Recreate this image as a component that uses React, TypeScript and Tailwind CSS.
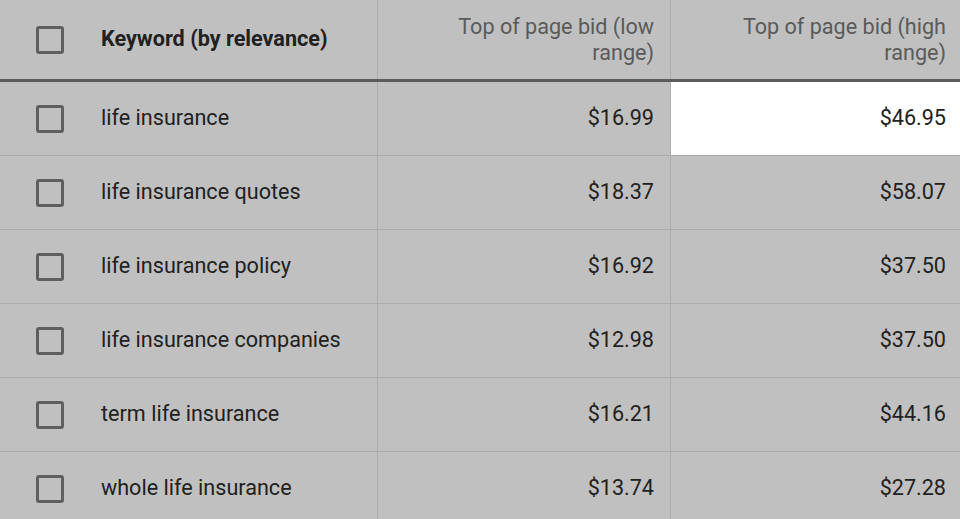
const rows = [
  { keyword: 'life insurance', low: '$16.99', high: '$46.95', highlight: true },
  { keyword: 'life insurance quotes', low: '$18.37', high: '$58.07' },
  { keyword: 'life insurance policy', low: '$16.92', high: '$37.50' },
  { keyword: 'life insurance companies', low: '$12.98', high: '$37.50' },
  { keyword: 'term life insurance', low: '$16.21', high: '$44.16' },
  { keyword: 'whole life insurance', low: '$13.74', high: '$27.28' },
]

function Checkbox() {
  return <div className="w-[28px] h-[28px] rounded-[3px] border-[3px] border-[#5f5f5f] shrink-0" />
}

export default function App() {
  return (
    <div
      className="w-[960px] h-[519px] overflow-hidden bg-[#c0c0c0] text-[#212121]"
      style={{ fontFamily: 'Roboto, "Liberation Sans", sans-serif' }}
    >
      {/* header */}
      <div className="flex h-[82px] border-b-[3px] border-[#5c5c5c]">
        <div className="w-[378px] flex items-center border-r border-[#acacac] pl-[36px]">
          <Checkbox />
          <span className="ml-[37px] text-[21.6px] font-bold">Keyword (by relevance)</span>
        </div>
        <div className="w-[293px] flex items-center justify-end border-r border-[#acacac] pr-[16px]">
          <span className="text-right text-[21.6px] leading-[26px] text-[#5a5a5a]">
            Top of page bid (low<br />range)
          </span>
        </div>
        <div className="flex-1 flex items-center justify-end pr-[14px]">
          <span className="text-right text-[21.6px] leading-[26px] text-[#5a5a5a]">
            Top of page bid (high<br />range)
          </span>
        </div>
      </div>

      {rows.map((r) => (
        <div key={r.keyword} className="flex h-[74px] border-b border-[#acacac]">
          <div className="w-[378px] flex items-center border-r border-[#acacac] pl-[36px]">
            <Checkbox />
            <span className="ml-[37px] text-[21.6px]">{r.keyword}</span>
          </div>
          <div className="w-[293px] flex items-center justify-end border-r border-[#acacac] pr-[16px] text-[21.6px]">
            {r.low}
          </div>
          <div
            className={
              r.highlight
                ? 'flex-1 flex items-center justify-end pr-[14px] text-[21.6px] bg-white'
                : 'flex-1 flex items-center justify-end pr-[14px] text-[21.6px]'
            }
          >
            {r.high}
          </div>
        </div>
      ))}
    </div>
  )
}
